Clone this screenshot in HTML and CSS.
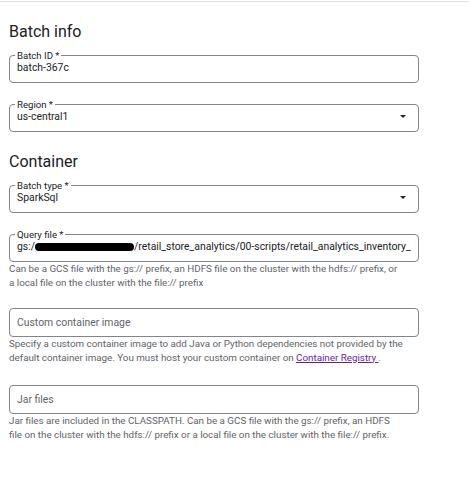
FILE: index.html
```html
<!DOCTYPE html>
<html lang="en">
<head>
<meta charset="utf-8">
<title>Batch</title>
<link rel="stylesheet" href="styles.css">
</head>
<body>
<div class="topbar"></div>
<main class="form">
  <h2 class="section-title">Batch info</h2>

  <fieldset class="field field-first">
    <legend class="field-label">Batch ID *</legend>
    <div class="field-value">batch-367c</div>
  </fieldset>

  <fieldset class="field field-gap">
    <legend class="field-label">Region *</legend>
    <div class="field-row">
      <span class="field-value">us-central1</span>
      <span class="caret"></span>
    </div>
  </fieldset>

  <h2 class="section-title section-title-2">Container</h2>

  <fieldset class="field field-first">
    <legend class="field-label">Batch type *</legend>
    <div class="field-row">
      <span class="field-value">SparkSql</span>
      <span class="caret"></span>
    </div>
  </fieldset>

  <fieldset class="field field-gap">
    <legend class="field-label">Query file *</legend>
    <div class="field-value clip">gs:/<span class="redact"></span>/retail_store_analytics/00-scripts/retail_analytics_inventory_</div>
  </fieldset>
  <p class="hint">Can be a GCS file with the gs:// prefix, an HDFS file on the cluster with the hdfs:// prefix, or<br>a local file on the cluster with the file:// prefix</p>

  <fieldset class="field field-plain field-gap-2">
    <div class="field-placeholder">Custom container image</div>
  </fieldset>
  <p class="hint">Specify a custom container image to add Java or Python dependencies not provided by the<br>default container image. You must host your custom container on <a class="link" href="#">Container Registry </a>.</p>

  <fieldset class="field field-plain field-gap-3">
    <div class="field-placeholder">Jar files</div>
  </fieldset>
  <p class="hint">Jar files are included in the CLASSPATH. Can be a GCS file with the gs:// prefix, an HDFS<br>file on the cluster with the hdfs:// prefix or a local file on the cluster with the file:// prefix.</p>
</main>
</body>
</html>
```

FILE: styles.css
```css
html, body {
  margin: 0;
  padding: 0;
  background: #ffffff;
}

body {
  font-family: Roboto, "Noto Sans", "Liberation Sans", Arial, sans-serif;
  color: #202124;
}

.topbar {
  height: 1px;
  margin-top: 1px;
  background: #e0e0e0;
}

.form {
  width: 410px;
  padding-left: 9px;
}

.section-title {
  margin: 20px 0 0;
  font-size: 16px;
  line-height: 20px;
  font-weight: 400;
  color: #202124;
}

.section-title-2 {
  margin-top: 20px;
}

.field {
  margin: 0;
  padding: 0 7px 8px;
  border: 1px solid #80868b;
  border-radius: 4px;
  min-width: 0;
}

.field-first {
  margin-top: 8px;
}

.field-gap {
  margin-top: 16px;
}

.field-gap-2 {
  margin-top: 19px;
}

.field-gap-3 {
  margin-top: 21px;
}

.field-plain {
  padding: 7px 7px 7px;
}

.field-label {
  margin-left: -2px;
  padding: 0 2px;
  font-size: 9.6px;
  line-height: 11px;
  color: #202124;
}

.field-value {
  font-size: 10.4px;
  line-height: 13px;
  color: #202124;
}

.field-placeholder {
  font-size: 10.4px;
  line-height: 13px;
  color: #5f6368;
}

.clip {
  white-space: nowrap;
  overflow: hidden;
}

.redact {
  display: inline-block;
  width: 99px;
  height: 8px;
  background: #000000;
  border-radius: 4px;
  vertical-align: -1px;
}

.field-row {
  display: flex;
  align-items: center;
  justify-content: space-between;
}

.caret {
  width: 0;
  height: 0;
  margin-right: 5px;
  border-left: 3.5px solid transparent;
  border-right: 3.5px solid transparent;
  border-top: 3.5px solid #202124;
}

.hint {
  margin: 0;
  font-size: 9.8px;
  line-height: 13.5px;
  color: #5f6368;
  white-space: nowrap;
}

.link {
  color: #681da8;
  text-decoration: underline;
}
```
